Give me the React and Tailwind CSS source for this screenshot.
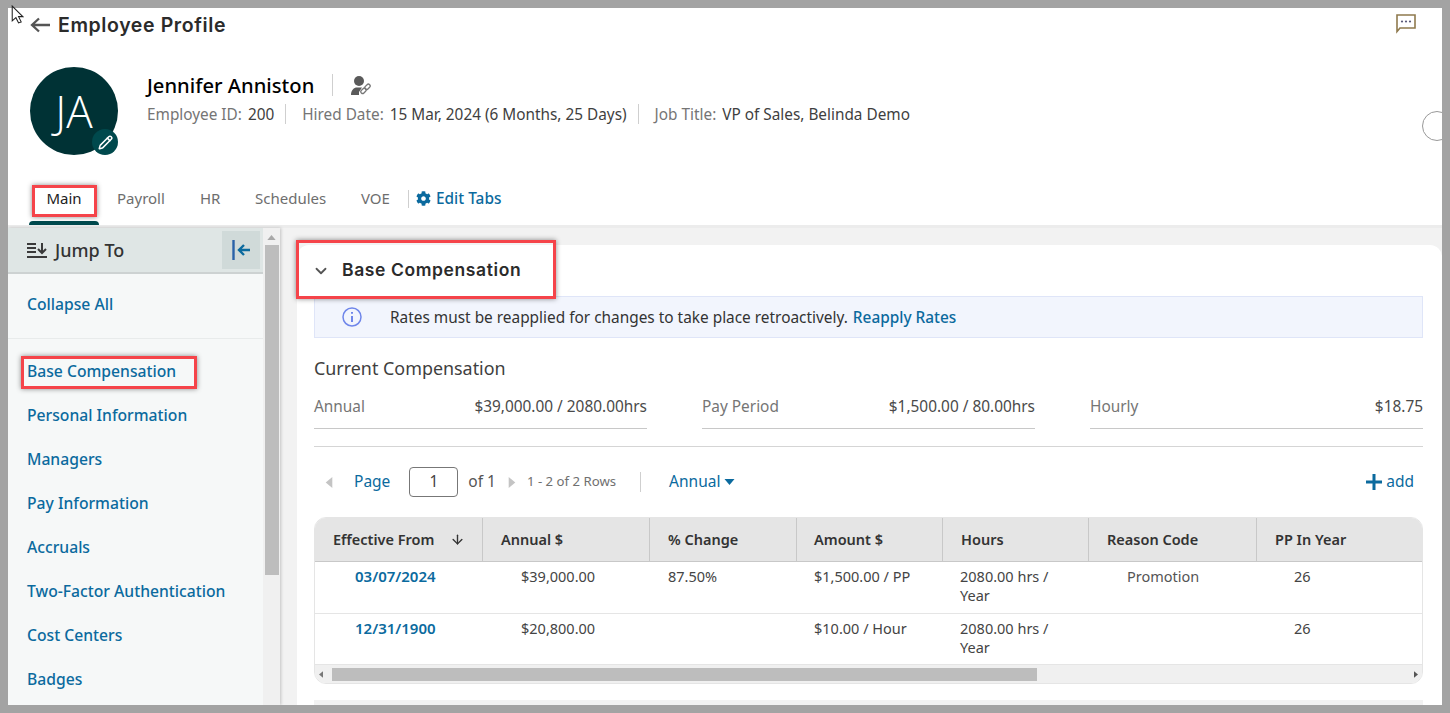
import { ArrowDown, ChevronDown, Pencil } from "lucide-react";
import { FaCog } from "react-icons/fa";

const navLinks = [
  "Base Compensation",
  "Personal Information",
  "Managers",
  "Pay Information",
  "Accruals",
  "Two-Factor Authentication",
  "Cost Centers",
  "Badges",
];

const tabs = [
  { label: "Main", width: "w-[71px]", active: true },
  { label: "Payroll", width: "w-[83px]" },
  { label: "HR", width: "w-[55px]" },
  { label: "Schedules", width: "w-[106px]" },
  { label: "VOE", width: "w-[64px]" },
];

const stats = [
  { label: "Annual", value: "$39,000.00 / 2080.00hrs" },
  { label: "Pay Period", value: "$1,500.00 / 80.00hrs" },
  { label: "Hourly", value: "$18.75" },
];

const columns = [
  { title: "Effective From", width: "w-[168px]", sort: true },
  { title: "Annual $", width: "w-[167px]" },
  { title: "% Change", width: "w-[147px]" },
  { title: "Amount $", width: "w-[146px]" },
  { title: "Hours", width: "w-[146px]" },
  { title: "Reason Code", width: "w-[168px]" },
  { title: "PP In Year", width: "w-[165px]" },
];

const rows = [
  { date: "03/07/2024", annual: "$39,000.00", change: "87.50%", amount: "$1,500.00 / PP", reason: "Promotion", height: "h-[52px]" },
  { date: "12/31/1900", annual: "$20,800.00", change: "", amount: "$10.00 / Hour", reason: "", height: "h-[51px]" },
];

const Divider = ({ className }) => <div className={`w-px bg-[#cfcfcf] ${className}`} />;

const RedBox = ({ className }) => (
  <div className={`absolute border-[3px] border-[#f5444a] shadow-[0_0_5px_rgba(0,0,0,0.45)] ${className}`} />
);

const TriangleLeft = ({ className }) => (
  <svg viewBox="0 0 6 10" className={className}><path d="M6 0v10L0 5z" fill="currentColor" /></svg>
);

const TriangleRight = ({ className }) => (
  <svg viewBox="0 0 6 10" className={className}><path d="M0 0v10l6-5z" fill="currentColor" /></svg>
);

export default function App() {
  return (
    <div className="relative h-[713px] w-[1450px] overflow-hidden bg-[#a3a3a3] pt-2 pb-2 pl-2 pr-2 font-['Noto_Sans',sans-serif] text-[#3c3c3c]">
      <div className="flex h-[697px] flex-col overflow-hidden bg-white">
        {/* title */}
        <div className="flex h-[34px] shrink-0 items-center pl-[22px]">
          <svg viewBox="0 0 20 16" className="h-[16px] w-[20px]" fill="none" stroke="#555" strokeWidth="2.300">
            <path d="M20 8H2M9 1.500L2 8l7 6.500" />
          </svg>
          <h1 className="ml-[8px] pt-[2px] font-['Inter',sans-serif] text-[19.500px] font-semibold leading-none tracking-[0.6px] text-[#2b2b2b]">
            Employee Profile
          </h1>
          <svg viewBox="0 0 20 20" className="ml-auto mr-[26px] mt-[-3px] h-[20px] w-[20px]" fill="none">
            <path d="M1 1h18v13H4l-3 3.500z" stroke="#8f7a4e" strokeWidth="1.600" />
            <circle cx="6" cy="7.500" r="1.100" fill="#5a5a7a" />
            <circle cx="10" cy="7.500" r="1.100" fill="#5a5a7a" />
            <circle cx="14" cy="7.500" r="1.100" fill="#5a5a7a" />
          </svg>
        </div>

        {/* employee header */}
        <div className="flex h-[113px] shrink-0 pl-[22px] pt-[25px]">
          <div className="relative flex h-[88px] w-[88px] items-center justify-center rounded-full bg-[#003235] font-['Open_Sans',sans-serif] text-[44px] font-light text-white">
            JA
            <div className="absolute bottom-0 right-0 flex h-[26px] w-[26px] items-center justify-center rounded-full bg-[#00494d]">
              <Pencil size={15} strokeWidth={2.4} className="text-white" />
            </div>
          </div>
          <div className="ml-[29px] pt-[5px]">
            <div className="flex h-[26px] items-center">
              <span className="text-[20.200px] font-medium leading-none text-black">Jennifer Anniston</span>
              <Divider className="ml-[18px] h-[22px]" />
              <svg viewBox="0 0 20 20" className="ml-[18px] h-[20px] w-[20px]">
                <circle cx="8" cy="6" r="5" fill="#5a5a5a" />
                <path d="M0 20c0-5 3-7.500 6-7.500h5L8 17v3z" fill="#5a5a5a" />
                <g fill="none" stroke="#777" strokeWidth="1.300">
                  <rect x="9.500" y="14" width="6" height="3.600" rx="1.800" transform="rotate(-45 12.500 15.800)" />
                  <rect x="13.500" y="10" width="6" height="3.600" rx="1.800" transform="rotate(-45 16.500 11.800)" />
                </g>
              </svg>
            </div>
            <div className="mt-[5px] flex h-[22px] items-center whitespace-nowrap text-[15.350px] text-[#3f3f3f]">
              <span className="text-[#757575]">Employee ID:</span>
              <span className="ml-[6px]">200</span>
              <Divider className="ml-[11px] mr-[16px] h-[20px]" />
              <span className="text-[#757575]">Hired Date:</span>
              <span className="ml-[6px]">15 Mar, 2024 (6 Months, 25 Days)</span>
              <Divider className="ml-[11px] mr-[16px] h-[20px]" />
              <span className="text-[#757575]">Job Title:</span>
              <span className="ml-[6px]">VP of Sales, Belinda Demo</span>
            </div>
          </div>
        </div>

        {/* tabs */}
        <div className="flex h-[73px] shrink-0 items-end border-b-[3px] border-[#ececec] pl-[21px]">
          {tabs.map((tab) => (
            <div key={tab.label} className={`flex h-[44px] flex-col ${tab.width}`}>
              <div className={`flex flex-1 items-center pb-[6px] text-[15px] ${tab.active ? "w-[70px] justify-center text-[#222]" : "pl-[17px] text-[#6e6e6e]"}`}>
                {tab.label}
              </div>
              <div className={`h-[4px] w-[70px] rounded-t-[4px] ${tab.active ? "bg-[#00494d]" : ""}`} />
            </div>
          ))}
          <div className="flex h-[44px] items-center pb-[9px]">
            <Divider className="h-[18px]" />
            <FaCog size={15} className="ml-[7px] text-[#0b6a9e]" />
            <span className="ml-[5px] text-[15.400px] font-medium text-[#0b6a9e]">Edit Tabs</span>
          </div>
        </div>

        <div className="flex min-h-0 flex-1 bg-[#f2f2f2]">
          {/* sidebar */}
          <div className="flex w-[272px] shrink-0 shadow-[1px_0_3px_rgba(0,0,0,0.2)]">
            <div className="w-[255px] shrink-0 bg-[#f6f8f8]">
              <div className="flex h-[46px] items-center border-b-2 border-[#cdd2d2] bg-[#dfe6e5] pl-[19px]">
                <svg viewBox="0 0 20 16" className="h-[16px] w-[20px]" fill="none" stroke="#3a3a3a" strokeWidth="2">
                  <path d="M0 2h9M0 6h9M0 10h9M0 15h20M15 1v10M11 7l4 4 4-4" />
                </svg>
                <span className="ml-[8px] text-[18px] font-medium text-[#333]">Jump To</span>
                <div className="ml-auto mr-[3px] flex h-[38px] w-[38px] items-center justify-center bg-[#d0dad9]">
                  <svg viewBox="0 0 18 20" className="h-[20px] w-[18px]" fill="none" strokeWidth="2.400">
                    <path d="M1.500 0v20" stroke="#2a62a8" />
                    <path d="M18 10H7M12 5l-5 5 5 5" stroke="#0b6a9e" />
                  </svg>
                </div>
              </div>
              <div className="flex h-[65px] items-center border-b border-[#e8ebeb] pb-[2px] pl-[19px] text-[15.700px] font-medium text-[#0b6a9e]">
                Collapse All
              </div>
              <div className="flex flex-col pl-[19px] pt-[11px]">
                {navLinks.map((link) => (
                  <a key={link} className="flex h-[44px] shrink-0 items-center text-[15.700px] font-medium text-[#0b6a9e]">
                    {link}
                  </a>
                ))}
              </div>
            </div>
            <div className="flex w-[17px] shrink-0 flex-col items-center bg-[#f0f0f0]">
              <svg viewBox="0 0 10 6" className="mt-[7px] h-[5px] w-[9px]"><path d="M5 0l5 6H0z" fill="#a8a8a8" /></svg>
              <div className="mt-[5px] h-[330px] w-[14px] bg-[#bdbdbd]" />
            </div>
          </div>

          {/* content */}
          <div className="ml-[17px] mt-[17px] flex-1 rounded-tl-[12px] rounded-tr-[12px] bg-white pl-[17px] pr-[19px]">
            <div className="flex h-[51px] items-center">
              <ChevronDown size={18} strokeWidth={2.4} className="ml-[-2px] text-[#555]" />
              <h2 className="ml-[12px] font-['Inter',sans-serif] text-[17.500px] font-semibold tracking-[0.6px] text-[#2b2b2b]">
                Base Compensation
              </h2>
            </div>
            <div className="flex h-[42px] items-center border border-[#dfe5f8] bg-[#f2f5fd] pl-[27px] text-[15.400px] text-[#333]">
              <svg viewBox="0 0 20 20" className="h-[20px] w-[20px]" fill="none" stroke="#6f86ea" strokeWidth="1.500">
                <circle cx="10" cy="10" r="9" />
                <path d="M10 9v6M10 5v1.800" strokeWidth="2" />
              </svg>
              <span className="ml-[28px] pt-[2px]">Rates must be reapplied for changes to take place retroactively.</span>
              <span className="ml-[5px] pt-[2px] font-medium text-[#0b6a9e]">Reapply Rates</span>
            </div>

            <div className="mt-[17px] text-[17.900px] leading-[26px] text-[#3f3f3f]">Current Compensation</div>
            <div className="mt-[4px] flex justify-between border-b border-[#d5d5d5] pb-[17px]">
              {stats.map((stat) => (
                <div key={stat.label} className="flex h-[44px] w-[333px] items-center justify-between border-b border-[#c8c8c8] text-[15.400px]">
                  <span className="text-[#757575]">{stat.label}</span>
                  <span className="text-[#4a4a4a]">{stat.value}</span>
                </div>
              ))}
            </div>

            {/* paging */}
            <div className="flex h-[70px] items-center">
              <TriangleLeft className="ml-[11px] h-[11px] w-[8px] text-[#c4c4c4]" />
              <span className="ml-[21px] text-[15.500px] text-[#0b6a9e]">Page</span>
              <div className="ml-[19px] flex h-[30px] w-[49px] items-center justify-center rounded-[4px] border border-[#777] text-[15.500px] text-[#444]">1</div>
              <span className="ml-[10px] text-[15.500px] text-[#555]">of 1</span>
              <TriangleRight className="ml-[12px] h-[11px] w-[8px] text-[#c4c4c4]" />
              <span className="ml-[11px] text-[13.200px] text-[#707070]">1 - 2 of 2 Rows</span>
              <Divider className="ml-[24px] h-[20px]" />
              <span className="ml-[28px] text-[15.500px] text-[#0b6a9e]">Annual</span>
              <svg viewBox="0 0 10 6" className="ml-[4px] h-[6px] w-[11px]"><path d="M0 0h10L5 6z" fill="#0b6a9e" /></svg>
              <div className="ml-auto mr-[9px] flex items-center text-[15.500px] text-[#0b6a9e]">
                <svg viewBox="0 0 16 16" className="h-[16px] w-[16px]"><path d="M6.500 0h3v6.500H16v3H9.500V16h-3V9.500H0v-3h6.500z" fill="#0b6a9e" /></svg>
                <span className="ml-[4px]">add</span>
              </div>
            </div>

            {/* table */}
            <div className="overflow-hidden rounded-[12px] border border-[#e5e5e5]">
              <div className="flex h-[44px] border-b border-[#c8c8c8] bg-[#e5e5e5]">
                {columns.map((col, i) => (
                  <div key={col.title} className={`flex shrink-0 items-center text-[14.500px] font-semibold text-[#333] ${col.title === "Amount $" ? "pl-[17px]" : "pl-[18px]"} ${col.width} ${i < 6 ? "border-r border-[#c8c8c8]" : ""}`}>
                    {col.title}
                    {col.sort && <ArrowDown size={15} strokeWidth={2.200} className="ml-[16px]" />}
                  </div>
                ))}
              </div>
              {rows.map((row) => (
                <div key={row.date} className={`flex border-b border-[#e5e5e5] text-[14.500px] leading-[19px] text-[#444] ${row.height}`}>
                  <div className="w-[168px] shrink-0 pl-[40px] pt-[5px] text-[15px] font-semibold text-[#0b6a9e]">{row.date}</div>
                  <div className="w-[167px] shrink-0 pl-[38px] pt-[5px]">{row.annual}</div>
                  <div className="w-[147px] shrink-0 pl-[18px] pt-[5px]">{row.change}</div>
                  <div className="w-[146px] shrink-0 pl-[17px] pt-[5px]">{row.amount}</div>
                  <div className="w-[146px] shrink-0 pl-[17px] pt-[5px]">2080.00 hrs /<br />Year</div>
                  <div className="w-[168px] shrink-0 pl-[38px] pt-[5px] text-[#555]">{row.reason}</div>
                  <div className="w-[165px] shrink-0 pl-[37px] pt-[5px]">26</div>
                </div>
              ))}
              <div className="flex h-[18px] items-center bg-[#f0f0f0] px-[4px]">
                <TriangleLeft className="h-[7px] w-[4px] text-[#777]" />
                <div className="ml-[9px] h-[13px] w-[705px] bg-[#bdbdbd]" />
                <TriangleRight className="ml-auto h-[7px] w-[4px] text-[#555]" />
              </div>
            </div>
            <div className="mt-[16px] h-[5px] bg-[#f2f2f2]" />
          </div>
        </div>
      </div>

      {/* annotations and overlays */}
      <RedBox className="left-[32px] top-[185px] h-[32px] w-[65px]" />
      <RedBox className="left-[21px] top-[356px] h-[33px] w-[176px]" />
      <RedBox className="left-[296px] top-[240px] h-[59px] w-[260px]" />
      <div className="absolute left-[1422px] top-[111px] h-[30px] w-[30px] rounded-full border border-[#999] bg-white" />
      <div className="absolute left-[1442px] top-0 h-[713px] w-[8px] bg-[#a3a3a3]" />
      <svg viewBox="0 0 12 18" className="absolute left-[11px] top-[5px] h-[19px] w-[13px]">
        <path d="M1 1v14l3.500-3 2.500 5 2.500-1-2.500-5H11z" fill="#fff" stroke="#222" strokeWidth="1" />
      </svg>
    </div>
  );
}
